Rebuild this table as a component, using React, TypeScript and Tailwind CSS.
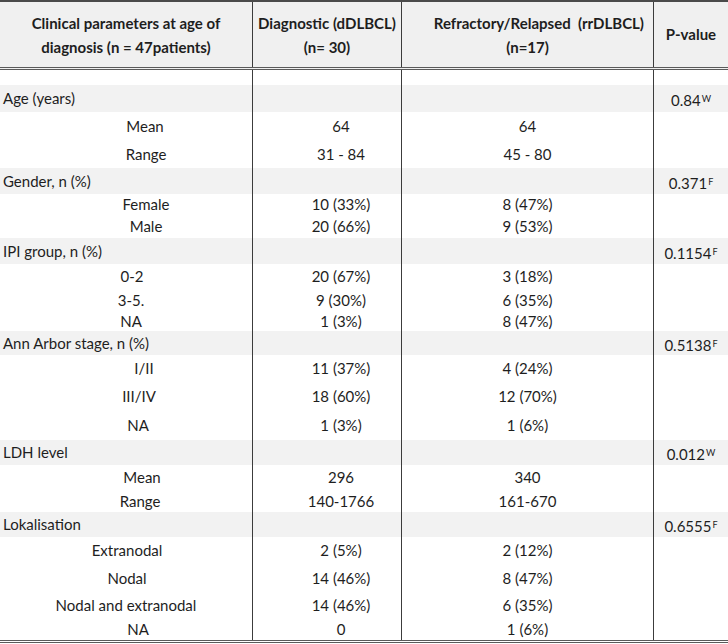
import React from "react";

type RowProps = {
  h: number;
  label?: string;
  off?: number;
  head?: boolean;
  gray?: boolean;
  v2?: string;
  v3?: string;
  p?: string;
  sup?: string;
};

const C1 = "w-[253px] shrink-0 border-r border-[#3c3c3c] h-full flex items-center";
const C2 = "w-[149px] shrink-0 border-r border-[#3c3c3c] h-full flex items-center justify-center";
const C3 = "w-[252px] shrink-0 border-r border-[#3c3c3c] h-full flex items-center justify-center";
const C4 = "flex-1 h-full flex items-center justify-center";

function Row({ h, label, off, head, gray, v2, v3, p, sup }: RowProps) {
  return (
    <div
      className={`flex w-full ${gray ? "bg-[#f2f2f2]" : "bg-white"}`}
      style={{ height: h }}
    >
      <div className={C1}>
        {label !== undefined &&
          (head ? (
            <span className="pl-[3px]">{label}</span>
          ) : (
            <span className="w-full text-center" style={{ paddingLeft: (off ?? 0) * 2 }}>
              {label}
            </span>
          ))}
      </div>
      <div className={C2}>
        {v2 !== undefined && <span className="pl-[28px]">{v2}</span>}
      </div>
      <div className={C3}>{v3 !== undefined && <span>{v3}</span>}</div>
      <div className={C4}>
        {p !== undefined && (
          <span className="pt-[4px]">
            {p}
            <sup className="text-[9px] relative top-[-4px] ml-[1px]">{sup}</sup>
          </span>
        )}
      </div>
    </div>
  );
}

export default function App() {
  return (
    <div
      className="w-[728px] h-[644px] bg-white text-[#1e1e1e] text-[15px] leading-none overflow-hidden"
      style={{ fontFamily: "Lato, 'Open Sans', sans-serif" }}
    >
      <div className="border-t-2 border-[#4a4a4a] border-b-[3px] border-b-[#5a5a5a] [border-bottom-style:double] bg-[#f0f0f0] flex h-[70px] font-bold text-[15px]">
        <div className="w-[253px] shrink-0 border-r border-[#3c3c3c] flex flex-col items-center justify-center leading-[24px]">
          <span>Clinical parameters at age of</span>
          <span>diagnosis (n = 47patients)</span>
        </div>
        <div className="w-[149px] shrink-0 border-r border-[#3c3c3c] flex flex-col items-center justify-center leading-[24px]">
          <span>Diagnostic (dDLBCL)</span>
          <span>(n= 30)</span>
        </div>
        <div className="w-[252px] shrink-0 border-r border-[#3c3c3c] flex flex-col justify-center leading-[24px]">
          <span className="self-end pr-[9px] whitespace-pre">Refractory/Relapsed  (rrDLBCL)</span>
          <span className="self-center">(n=17)</span>
        </div>
        <div className="flex-1 flex items-center justify-center">
          <span>P-value</span>
        </div>
      </div>
      <Row h={15} />
      <Row h={27} gray head label="Age (years)" p="0.84" sup="W" />
      <Row h={28} label="Mean" off={19} v2="64" v3="64" />
      <Row h={28} label="Range" off={20} v2="31 - 84" v3="45 - 80" />
      <Row h={26} gray head label="Gender, n (%)" p="0.371" sup="F" />
      <Row h={21} label="Female" off={20} v2="10 (33%)" v3="8 (47%)" />
      <Row h={23} label="Male" off={20} v2="20 (66%)" v3="9 (53%)" />
      <Row h={26} gray head label="IPI group,  n (%)" p="0.1154" sup="F" />
      <Row h={25} label="0-2" off={6} v2="20 (67%)" v3="3 (18%)" />
      <Row h={22} label="3-5." off={5} v2="9 (30%)" v3="6 (35%)" />
      <Row h={20} label="NA" off={5} v2="1 (3%)" v3="8 (47%)" />
      <Row h={24} gray head label="Ann Arbor stage, n (%)" p="0.5138" sup="F" />
      <Row h={26} label="I/II" off={18} v2="11 (37%)" v3="4 (24%)" />
      <Row h={30} label="III/IV" off={13} v2="18 (60%)" v3="12 (70%)" />
      <Row h={29} label="NA" off={12} v2="1 (3%)" v3="1 (6%)" />
      <Row h={25} gray head label="LDH level" p="0.012" sup="W" />
      <Row h={25} label="Mean" off={16} v2="296" v3="340" />
      <Row h={22} label="Range" off={14} v2="140-1766" v3="161-670" />
      <Row h={25} gray head label="Lokalisation" p="0.6555" sup="F" />
      <Row h={27} label="Extranodal" off={1} v2="2 (5%)" v3="2 (12%)" />
      <Row h={28} label="Nodal" off={1} v2="14 (46%)" v3="8 (47%)" />
      <Row h={26} label="Nodal and extranodal" off={0} v2="14 (46%)" v3="6 (35%)" />
      <Row h={22} label="NA" off={12} v2="0" v3="1 (6%)" />
      <div className="h-[4px] border-t-[3px] border-[#5a5a5a] [border-top-style:double]" />
    </div>
  );
}
